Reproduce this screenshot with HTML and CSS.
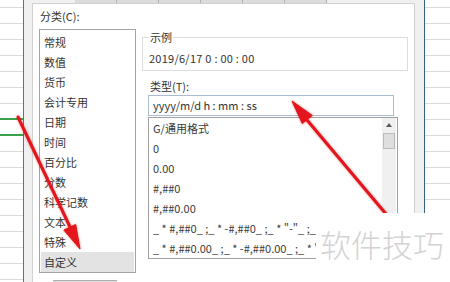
FILE: index.html
```html
<!DOCTYPE html>
<html lang="zh-CN">
<head>
  <meta charset="UTF-8">
  <title>设置单元格格式</title>
  <link rel="stylesheet" href="styles.css">
</head>
<body>

  <div class="screen">
    <div class="sheet sheet-left">
      <div class="cell-sel"></div>
    </div>

    <div class="dialog">
      <div class="tabs">
        <span></span><span></span><span></span><span></span><span></span><span></span>
      </div>

      <div class="panel">
        <div class="col-cat">
          <div class="label">分类(C):</div>
          <ul class="cat-list">
            <li>常规</li>
            <li>数值</li>
            <li>货币</li>
            <li>会计专用</li>
            <li>日期</li>
            <li>时间</li>
            <li>百分比</li>
            <li>分数</li>
            <li>科学记数</li>
            <li>文本</li>
            <li>特殊</li>
            <li class="selected">自定义</li>
          </ul>
          <div class="btn"></div>
        </div>

        <div class="col-fmt">
          <fieldset class="sample">
            <legend>示例</legend>
            <div class="sample-value">2019/6/17 0 : 00 : 00</div>
          </fieldset>

          <div class="label type-label">类型(T):</div>
          <div class="type-input">yyyy/m/d h : mm : ss</div>

          <div class="fmt-list">
            <ul>
              <li>G/通用格式</li>
              <li>0</li>
              <li>0.00</li>
              <li>#,##0</li>
              <li>#,##0.00</li>
              <li>_ * #,##0_ ;_ * -#,##0_ ;_ * "-"_ ;_ @_ </li>
              <li>_ * #,##0.00_ ;_ * -#,##0.00_ ;_ * "-"??_ ;_ @_ </li>
            </ul>
            <div class="scrollbar">
              <div class="sb-up"><i></i></div>
              <div class="sb-thumb"></div>
            </div>
          </div>
        </div>
      </div>
    </div>

    <div class="sheet sheet-right"></div>
  </div>

  <!-- annotation arrows -->
  <svg class="arrows" width="450" height="282" viewBox="0 0 450 282">
    <g fill="#e3161d" stroke="#e3161d">
      <line x1="18" y1="117" x2="71" y2="229" stroke-width="3" stroke-linecap="round"/>
      <polygon points="80,249 75.7,224.5 63.9,230.1" stroke-width="1"/>
      <line x1="386" y1="214" x2="307" y2="120" stroke-width="3" stroke-linecap="round"/>
      <polygon points="292,101 312.3,115.4 302.3,123.6" stroke-width="1"/>
    </g>
  </svg>

  <div class="watermark">软件技巧</div>

</body>
</html>
```

FILE: styles.css
```css
body {
  margin: 0;
  width: 450px;
  height: 282px;
  overflow: hidden;
  position: relative;
  font-family: 'Noto Sans CJK SC', 'Microsoft YaHei', sans-serif;
  font-size: 11px;
  color: #333;
  background: #fff;
}

ul {
  list-style: none;
  margin: 0;
  padding: 0;
}

.screen {
  display: flex;
  height: 282px;
  overflow: hidden;
}

/* excel grid behind the dialog */
.sheet {
  background: repeating-linear-gradient(to bottom, transparent 0 7px, #dadada 7px 8px, transparent 8px 16px);
}

.sheet-left {
  width: 23px;
}

.sheet-right {
  flex: 1;
}

.cell-sel {
  margin-top: 118px;
  height: 14px;
  border-top: 2px solid #3c9f4a;
  border-bottom: 2px solid #3c9f4a;
}

.dialog {
  width: 383px;
  padding: 0 9px 0 8px;
  background: #f0f0f0;
  border-left: 1px solid #6e6e6e;
  border-right: 1px solid #37627a;
  display: flex;
  flex-direction: column;
}

.tabs {
  height: 3px;
  padding-left: 43px;
  display: flex;
}

.tabs span {
  width: 41px;
  background: #dcdcdc;
  border-right: 1px solid #b0b0b0;
}

.panel {
  flex: 1;
  min-height: 0;
  overflow: hidden;
  display: flex;
  padding: 4px 0 0 6px;
  background: #fff;
  border: 1px solid #d0d0d0;
  border-bottom: none;
}

.label {
  line-height: 16px;
  height: 16px;
  white-space: nowrap;
}

.col-cat {
  width: 97px;
}

.col-cat .label {
  padding-left: 1px;
}

.cat-list {
  margin-top: 5px;
  border: 1px solid #a3a3a3;
  padding: 2px 1px 0;
}

.cat-list li {
  height: 20px;
  line-height: 20px;
  padding-left: 3px;
}

.cat-list li.selected {
  background: #e3e3e3;
}

.btn {
  margin: 7px 0 0 14px;
  width: 64px;
  height: 1px;
  border-top: 1px solid #adadad;
  background: #e1e1e1;
}

.col-fmt {
  width: 266px;
  margin-left: 6px;
  padding-top: 21px;
}

.sample {
  margin: 0;
  padding: 5px 6px 4px;
  border: 1px solid #dcdcdc;
  min-width: 0;
}

.sample legend {
  padding: 0 1px;
  line-height: 16px;
}

.sample-value {
  line-height: 16px;
  letter-spacing: 0.25px;
}

.type-label {
  margin-top: 7px;
  padding-left: 8px;
}

.type-input {
  margin: 1px 0 0 6px;
  width: 240px;
  height: 19px;
  line-height: 19px;
  padding-left: 4px;
  border: 1px solid #abbdd2;
  white-space: nowrap;
}

.fmt-list {
  margin: 1px 0 0 6px;
  width: 248px;
  height: 140px;
  border: 1px solid #a0a0a0;
  display: flex;
  justify-content: space-between;
  overflow: hidden;
}

/* the right part of the list is hidden under the watermark */
.fmt-list ul {
  width: 167px;
  overflow: hidden;
}

.fmt-list li {
  height: 20px;
  line-height: 20px;
  padding-left: 4px;
  white-space: pre;
  overflow: hidden;
  color: #3a3a3a;
}

.scrollbar {
  width: 14px;
  margin-right: 1px;
  background: #f0f0f0;
  display: flex;
  flex-direction: column;
  align-items: center;
}

.sb-up {
  height: 14px;
  width: 100%;
  display: flex;
  align-items: center;
  justify-content: center;
}

.sb-up i {
  width: 0;
  height: 0;
  border-left: 3px solid transparent;
  border-right: 3px solid transparent;
  border-bottom: 4px solid #5a5a5a;
}

.sb-thumb {
  margin-top: 1px;
  width: 10px;
  height: 14px;
  border: 1px solid #bcbcbc;
  background: #dedede;
}

.arrows {
  position: absolute;
  left: 0;
  top: 0;
  pointer-events: none;
  filter: drop-shadow(0 0 1px rgba(220, 30, 30, 0.6));
}

.watermark {
  position: absolute;
  left: 316px;
  top: 213px;
  right: 0;
  bottom: 0;
  background: #fff;
  padding: 13px 0 0 4px;
  font-size: 31px;
  line-height: 36px;
  font-weight: 300;
  color: #d3d3d3;
  white-space: nowrap;
}
```
